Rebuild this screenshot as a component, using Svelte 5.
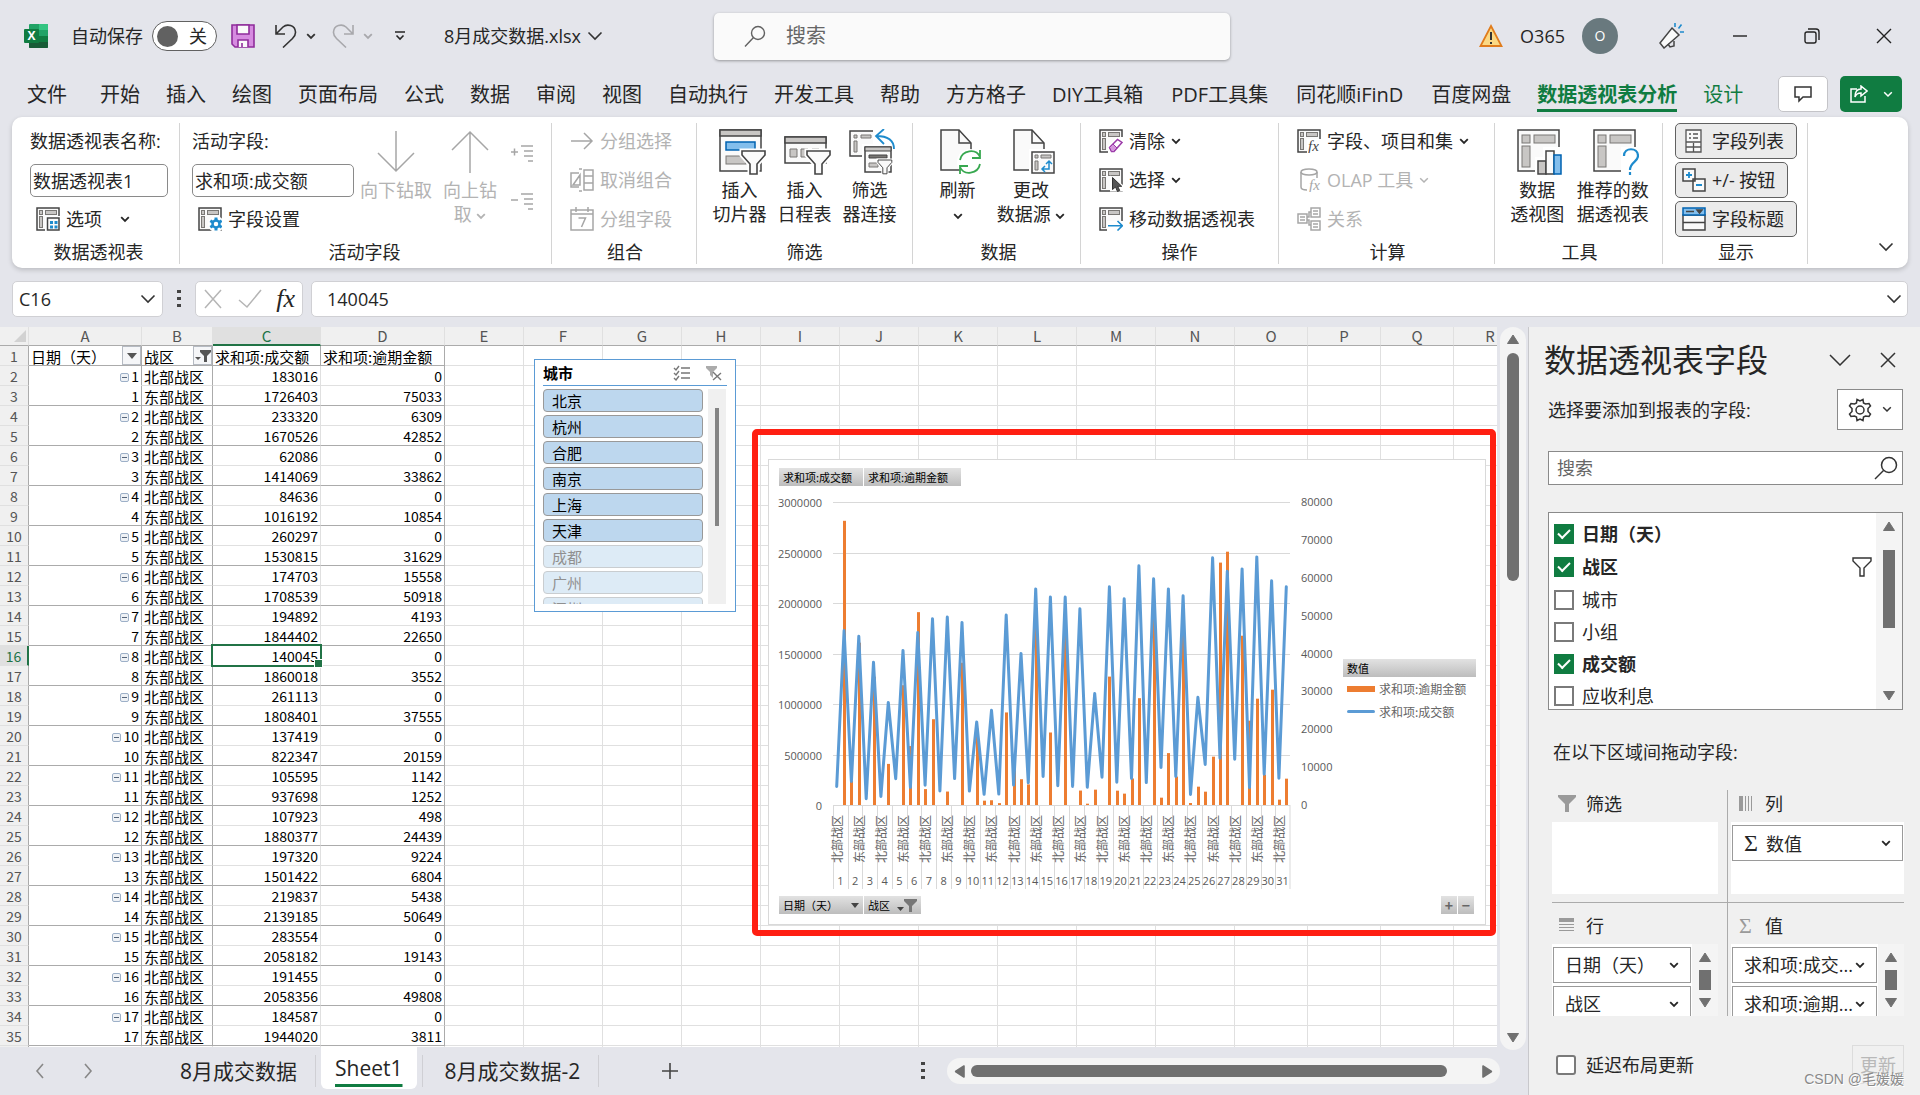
<script lang="ts">
  type Pair = [number, number];

  interface Field {
    name: string;
    checked: boolean;
    filtered?: boolean;
  }

  const menuTabs = [
    '文件', '开始', '插入', '绘图', '页面布局', '公式', '数据', '审阅', '视图', '自动执行',
    '开发工具', '帮助', '方方格子', 'DIY工具箱', 'PDF工具集', '同花顺iFinD', '百度网盘',
    '数据透视表分析', '设计',
  ];
  let activeMenu = $state('数据透视表分析');

  // Amount per day: [北部战区, 东部战区]
  const amount: Pair[] = [
    [183016, 1726403], [233320, 1670526], [62086, 1414069], [84636, 1016192],
    [260297, 1530815], [174703, 1708539], [194892, 1844402], [140045, 1860018],
    [261113, 1808401], [137419, 822347], [105595, 937698], [107923, 1880377],
    [197320, 1501422], [219837, 2139185], [283554, 2058182], [191455, 2058356],
    [184587, 1944020], [175000, 1104000], [275000, 2160000], [225000, 2042000],
    [262000, 2368000], [222000, 2240000], [372000, 2140000], [282000, 2072000],
    [104000, 1066000], [402000, 2448000], [462000, 2315000], [452000, 2338000],
    [174000, 2456000], [304000, 2220000], [265000, 2160000],
  ];

  // Overdue amount per day, same order
  const overdue: Pair[] = [
    [0, 75033], [6309, 42852], [0, 33862], [0, 10854], [0, 31629], [15558, 50918],
    [4193, 22650], [0, 3552], [0, 37555], [0, 20159], [1142, 1252], [498, 24439],
    [9224, 6804], [5438, 50649], [0, 19143], [0, 49808], [0, 3811], [350, 4050],
    [0, 33900], [3784, 3000], [7000, 28200], [0, 49400], [1936, 13700], [7500, 45400],
    [528, 4840], [3520, 12760], [64000, 66880], [0, 44700], [22264, 28072],
    [8000, 30448], [1408, 6952],
  ];

  const zones = ['北部战区', '东部战区'];
  const columns = 'ABCDEFGHIJKLMNOPQR'.split('');
  const extraColumns = columns.slice(4);

  const rows = Array.from({ length: 34 }, (_, i) => {
    const day = Math.floor(i / 2);
    const side = i % 2;
    return {
      no: i + 2,
      day: day + 1,
      first: side === 0,
      zone: zones[side],
      amount: amount[day][side],
      overdue: overdue[day][side],
    };
  });

  const cities = ['北京', '杭州', '合肥', '南京', '上海', '天津', '成都', '广州', '深圳'];

  let fields = $state<Field[]>([
    { name: '日期（天）', checked: true },
    { name: '战区', checked: true, filtered: true },
    { name: '城市', checked: false },
    { name: '小组', checked: false },
    { name: '成交额', checked: true },
    { name: '应收利息', checked: false },
  ]);

  // Chart geometry
  const plot = { left: 65, right: 522, top: 43, bottom: 346 };
  const plotHeight = plot.bottom - plot.top;
  const step = (plot.right - plot.left) / 62;
  const xAt = (i: number) => plot.left + (i + 0.5) * step;
  const flatAmount = amount.flat();
  const flatOverdue = overdue.flat();
  const linePoints = flatAmount
    .map((v, i) => `${xAt(i).toFixed(1)},${(plot.bottom - (v / 3000000) * plotHeight).toFixed(1)}`)
    .join(' ');
  const leftTicks = [0, 1, 2, 3, 4, 5, 6].map((n) => n * 500000);
  const rightTicks = [0, 1, 2, 3, 4, 5, 6, 7, 8].map((n) => n * 10000);
</script>

{#snippet chev()}
  <svg class="chev" viewBox="0 0 10 7" width="10" height="7"><path d="M1.2 1.2 5 5l3.8-3.8" /></svg>
{/snippet}

{#snippet bigChev()}
  <svg class="big-chev" viewBox="0 0 16 10" width="16" height="10"><path d="M1.5 1.5 8 8l6.500-6.500" /></svg>
{/snippet}

{#snippet tri(dir: string)}
  <svg class="tri {dir}" viewBox="0 0 14 11" width="14" height="11"><path d="M7 1 12.500 9.500h-11z" /></svg>
{/snippet}

{#snippet pivot(name: string)}
  <svg viewBox="0 0 24 24" width="24" height="24" fill="none">
    <rect x="1" y="1" width="22" height="22" fill="#fafafa" stroke="#444" stroke-width="1.500" />
    <rect x="3.500" y="3.500" width="3" height="4" fill="#c8c6c4" stroke="#797774" />
    <rect x="9.500" y="3.500" width="11" height="4" fill="#c8c6c4" stroke="#797774" />
    <rect x="3.500" y="9.500" width="3" height="11" fill="#c8c6c4" stroke="#797774" />
    {#if name === 'options'}
      <rect x="9" y="9" width="15" height="15" fill="#fff" />
      <rect x="11.500" y="11" width="11.500" height="12" fill="#fafafa" stroke="#444" stroke-width="1.500" />
      <path d="M14 14h3v3h-3zM18.500 14h3v3h-3zM14 18.500h3v3h-3zM18.500 18.500h3v3h-3z" fill="#1e8bcd" />
    {:else if name === 'settings'}
      <circle cx="18" cy="17" r="8" fill="#fff" />
      <path d="M18 10.500v13M12.300 13.800l11.400 6.400M12.300 20.200l11.400-6.400" stroke="#1e8bcd" stroke-width="3" />
      <circle cx="18" cy="17" r="3.500" fill="#fff" stroke="#1e8bcd" stroke-width="2.500" />
    {:else if name === 'clear'}
      <path d="M9 24V17l9-9h6v16z" fill="#fff" />
      <path d="m10.500 18.500 8-8 4.500 3-8 9h-2.500z" fill="#fff" stroke="#9b3aa8" stroke-width="1.500" />
      <path d="m10.500 18.500 3.500-3.500 4 4-3.500 3.500h-2z" fill="#d497dc" stroke="#9b3aa8" />
    {:else if name === 'select'}
      <path d="M11 7.500v16h13V17z" fill="#fff" />
      <path d="M13.500 9.500v12l3-2.500 2 4.500 2.200-1-2-4.200h4z" fill="#555" stroke="#333" />
    {:else if name === 'move'}
      <path d="M8 14h16v10H8z" fill="#fff" />
      <path d="M9 18.800h14M18.500 14l4.800 4.800-4.800 4.700" stroke="#1e8bcd" stroke-width="1.600" />
    {:else if name === 'calc'}
      <path d="M10 10h14v14H10z" fill="#fff" />
      <text x="11" y="22" class="fx-mark">fx</text>
    {/if}
  </svg>
{/snippet}

{#snippet bigPivot()}
  <rect x="1" y="1" width="41" height="41" fill="#fafafa" stroke="#444" stroke-width="1.500" />
  <rect x="5" y="6" width="8" height="8" fill="#c8c6c4" stroke="#797774" />
  <rect x="17" y="6" width="21" height="8" fill="#c8c6c4" stroke="#797774" />
  <rect x="5" y="17" width="8" height="21" fill="#c8c6c4" stroke="#797774" />
{/snippet}

{#snippet sheetIcon()}
  <path d="M1 1h18l12 13v27H1z" fill="#fafafa" stroke="#444" stroke-width="1.500" />
  <path d="M19 1v13h12" stroke="#444" stroke-width="1.500" />
{/snippet}

{#snippet funnel(x: number, y: number, s: number)}
  <g transform="translate({x} {y}) scale({s})">
    <path d="M0 0h23v4l-8 9v10H8V13L0 4z" fill="#fafafa" stroke="#fff" stroke-width="5" />
    <path d="M0 0h23v4l-8 9v10H8V13L0 4z" fill="#fafafa" stroke="#444" stroke-width="1.600" />
  </g>
{/snippet}

<div class="app">
  <header class="title-bar">
    <div class="quick">
      <svg class="logo" viewBox="0 0 24 24" width="24" height="24">
        <path d="M6 0h17a1 1 0 0 1 1 1v22a1 1 0 0 1-1 1H6a1 1 0 0 1-1-1V1a1 1 0 0 1 1-1z" fill="#21a366" />
        <path d="M15 0h8a1 1 0 0 1 1 1v5h-9z" fill="#33c481" />
        <path d="M5 12h10v12H6a1 1 0 0 1-1-1z" fill="#185c37" />
        <path d="M15 12h9v6h-9z" fill="#107c41" />
        <path d="M15 18h9v5a1 1 0 0 1-1 1h-8z" fill="#185c37" />
        <rect y="5" width="15" height="14" rx="1" fill="#107c41" />
        <text x="7.500" y="16" text-anchor="middle" class="logo-letter">X</text>
      </svg>
      <label class="autosave">
        <span>自动保存</span>
        <input type="checkbox" class="sr" />
        <span class="toggle"><i></i>关</span>
      </label>
      <button class="icon-btn save" aria-label="保存">
        <svg viewBox="0 0 24 24" width="24" height="24" fill="none" stroke="#8f2d9b" stroke-width="1.600">
          <path d="M1 1h22v22H4l-3-3z" fill="#d68be0" />
          <path d="M6 1h12v9H6zM7 23v-7h10v7" fill="#fafafa" />
          <path d="M11 19v4" />
        </svg>
      </button>
      <button class="icon-btn undo" aria-label="撤消">
        <svg viewBox="0 0 24 24" width="24" height="24"><path d="M2 1v9h9M2 10l7-7c4-3.500 12-2 12.500 5 .2 3-1.500 5-3 6.500L9 23.500" /></svg>
        {@render chev()}
      </button>
      <button class="icon-btn redo" aria-label="恢复">
        <svg viewBox="0 0 24 24" width="24" height="24"><path d="M22 1v9h-9M22 10l-7-7C11 -.5 3 1 2.500 8c-.2 3 1.500 5 3 6.500L15 23.500" /></svg>
        {@render chev()}
      </button>
      <button class="icon-btn more" aria-label="自定义快速访问工具栏">
        <svg viewBox="0 0 12 10" width="12" height="10"><path d="M1 1h10M2.500 4.500 6 8l3.500-3.500" /></svg>
      </button>
      <button class="file-name">8月成交数据.xlsx {@render bigChev()}</button>
    </div>
    <div class="search">
      <svg viewBox="0 0 22 22" width="22" height="22"><circle cx="14" cy="8" r="6.500" /><path d="m9.500 12.500-8.500 9" /></svg>
      <input aria-label="搜索" placeholder="搜索" />
    </div>
    <div class="account">
      <svg viewBox="0 0 24 24" width="24" height="24" class="warn">
        <path d="M12 2 22.500 22h-21z" fill="#fbd984" stroke="#e07c1c" stroke-width="1.800" />
        <path d="M12 8v8M12 18v2" stroke="#333" stroke-width="2" />
      </svg>
      <span>O365</span>
      <span class="avatar">O</span>
      <svg viewBox="0 0 26 26" width="26" height="26" class="horn">
        <path d="M14 5 21 12 6 25l-4-5z" fill="#fafafa" stroke="#444" stroke-width="1.500" />
        <path d="m10 21 2 3 4-1v-5" fill="none" stroke="#444" stroke-width="1.500" />
        <path d="M17 4V0M20.500 5.500l3-4M22 9h4" stroke="#1e8bcd" stroke-width="1.600" />
      </svg>
      <button class="win" aria-label="最小化"><svg viewBox="0 0 16 16" width="16" height="16"><path d="M1 8h14" /></svg></button>
      <button class="win" aria-label="还原"><svg viewBox="0 0 16 16" width="16" height="16"><rect x="1" y="4" width="11" height="11" rx="2" /><path d="M4 1h8a3 3 0 0 1 3 3v8" /></svg></button>
      <button class="win" aria-label="关闭"><svg viewBox="0 0 16 16" width="16" height="16"><path d="m1 1 14 14M15 1 1 15" /></svg></button>
    </div>
  </header>

  <nav class="menu">
    {#each menuTabs as tab}
      <button
        class="menu-tab"
        class:active={tab === activeMenu}
        class:context={tab === '设计'}
        class:latin={/[A-Z]/.test(tab)}
        onclick={() => (activeMenu = tab)}
      >
        {tab}
      </button>
    {/each}
    <div class="menu-right">
      <button class="comment-btn" aria-label="批注">
        <svg viewBox="0 0 18 18" width="18" height="18"><path d="M1 2h16v10H9l-4 4v-4H1z" /></svg>
      </button>
      <button class="share-btn" aria-label="共享">
        <svg viewBox="0 0 18 18" width="18" height="18"><path d="M7 4H1v13h14v-6M11 1l6 5-6 5V8c-3 0-5 1-6 4 0-5 2-8 6-8z" /></svg>
        {@render chev()}
      </button>
    </div>
  </nav>

  <section class="ribbon">
    <div class="group g-name">
      <div class="rows">
        <label for="pivot-name">数据透视表名称:</label>
        <input id="pivot-name" value="数据透视表1" />
        <button class="item pad">{@render pivot('options')}选项<span class="gap"></span>{@render chev()}</button>
      </div>
      <h2>数据透视表</h2>
    </div>

    <div class="group g-field">
      <div class="body">
        <div class="rows">
          <label for="active-field">活动字段:</label>
          <input id="active-field" value="求和项:成交额" />
          <button class="item pad">{@render pivot('settings')}字段设置</button>
        </div>
        <button class="big dim" disabled>
          <svg viewBox="0 0 44 46" width="44" height="46"><path d="M22 2v40M4 24l18 18 18-18" /></svg>
          <span>向下钻取</span>
        </button>
        <button class="big dim" disabled>
          <svg viewBox="0 0 44 46" width="44" height="46"><path d="M22 44V3M4 21 22 3l18 18" /></svg>
          <span>向上钻<br />取 {@render chev()}</span>
        </button>
        <div class="expand">
          <button class="dim" disabled aria-label="展开字段"><svg viewBox="0 0 24 18" width="24" height="18"><path d="M1 7h7M4.500 3.500v7M11 1h12M14 6h9M14 11h9M18 16h5" /></svg></button>
          <button class="dim" disabled aria-label="折叠字段"><svg viewBox="0 0 24 18" width="24" height="18"><path d="M1 7h7M11 1h12M14 6h9M14 11h9M18 16h5" /></svg></button>
        </div>
      </div>
      <h2>活动字段</h2>
    </div>

    <div class="group g-combine">
      <div class="rows">
        <button class="item dim" disabled><svg viewBox="0 0 24 24" width="24" height="24"><path d="M1 12h21M14 4l8 8-8 8" /></svg>分组选择</button>
        <button class="item dim" disabled><svg viewBox="0 0 24 24" width="24" height="24"><path d="M9 5H1v14h8M9 1h3M9 23h3M3 17l7-10v10zM14 2h9v20h-9zM14 8h9M14 15h9" /></svg>取消组合</button>
        <button class="item dim" disabled>
          <svg viewBox="0 0 24 24" width="24" height="24"><path d="M1 3h22v20H1zM1 7h22M6 0v5M18 0v5M8.500 11h7l-4 9" /></svg>分组字段
        </button>
      </div>
      <h2>组合</h2>
    </div>

    <div class="group g-filter">
      <div class="body even">
        <button class="big">
          <svg viewBox="0 0 48 46" width="48" height="46" fill="none">
            <rect x="1" y="1" width="41" height="41" fill="#fafafa" stroke="#444" stroke-width="1.500" />
            <path d="M1 1h41v6H1z" fill="#c8c6c4" stroke="#444" stroke-width="1.500" />
            <rect x="7" y="13" width="29" height="8" fill="#83beec" stroke="#0063b1" stroke-width="1.500" />
            <rect x="7" y="27" width="20" height="8" fill="#c8c6c4" stroke="#797774" />
            {@render funnel(23, 22, 1)}
          </svg>
          <span>插入<br />切片器</span>
        </button>
        <button class="big">
          <svg viewBox="0 0 48 46" width="48" height="46" fill="none">
            <rect x="1" y="8" width="41" height="26" fill="#fafafa" stroke="#444" stroke-width="1.500" />
            <path d="M1 8h41v6H1z" fill="#c8c6c4" stroke="#444" stroke-width="1.500" />
            <path d="M6 20h7v8H6zM17 20h7v8h-7zM28 20h7v8h-7z" fill="#c8c6c4" stroke="#797774" />
            {@render funnel(23, 22, 1)}
          </svg>
          <span>插入<br />日程表</span>
        </button>
        <button class="big">
          <svg viewBox="0 0 48 46" width="48" height="46" fill="none">
            <rect x="1" y="2" width="26" height="25" fill="#fafafa" stroke="#444" stroke-width="1.500" />
            <path d="M5 6h3v3H5zM12 6h10v3H12zM5 12h3v11H5z" fill="#c8c6c4" stroke="#797774" />
            <rect x="24" y="0" width="24" height="18" fill="#fff" />
            <rect x="13" y="15" width="32" height="30" fill="#fff" />
            <rect x="16" y="18" width="26" height="25" fill="#fafafa" stroke="#444" stroke-width="1.500" />
            <path d="M16 18h26v4H16z" fill="#c8c6c4" stroke="#444" />
            <path d="M20 26h18v3H20z" fill="#797774" stroke="#444" />
            <path d="M20 34h9v4h-9z" fill="#c8c6c4" stroke="#797774" />
            <path d="M35 0 27 7l8 8M27 7c11 0 18 4 18 13" stroke="#1e8bcd" stroke-width="1.800" />
            {@render funnel(29, 31, 0.6)}
          </svg>
          <span>筛选<br />器连接</span>
        </button>
      </div>
      <h2>筛选</h2>
    </div>

    <div class="group g-data">
      <div class="body even">
        <button class="big">
          <svg viewBox="0 0 44 46" width="44" height="46" fill="none">
            {@render sheetIcon()}
            <circle cx="30" cy="33" r="13" fill="#fff" />
            <path d="M20 31c2-10 16-12 20-3M40 21v8h-8M40 35c-2 10-16 12-20 3M20 45v-8h8" stroke="#38a850" stroke-width="1.800" />
          </svg>
          <span>刷新<br />{@render chev()}</span>
        </button>
        <button class="big">
          <svg viewBox="0 0 44 46" width="44" height="46" fill="none">
            {@render sheetIcon()}
            <rect x="16" y="20" width="28" height="26" fill="#fff" />
            <rect x="19" y="23" width="22" height="21" fill="#fafafa" stroke="#444" stroke-width="1.500" />
            <path d="M22 26h3v3h-3zM28 26h10v3H28zM22 32h3v9h-3z" fill="#c8c6c4" stroke="#797774" />
            <path d="M29 40h7v-8M32 37l-3 3 3 3M33 35l3-3 3 3" stroke="#1e8bcd" stroke-width="1.500" />
          </svg>
          <span>更改<br />数据源 {@render chev()}</span>
        </button>
      </div>
      <h2>数据</h2>
    </div>

    <div class="group g-action">
      <div class="rows">
        <button class="item">{@render pivot('clear')}清除 {@render chev()}</button>
        <button class="item">{@render pivot('select')}选择 {@render chev()}</button>
        <button class="item">{@render pivot('move')}移动数据透视表</button>
      </div>
      <h2>操作</h2>
    </div>

    <div class="group g-calc">
      <div class="rows">
        <button class="item">{@render pivot('calc')}字段、项目和集 {@render chev()}</button>
        <button class="item dim" disabled>
          <svg viewBox="0 0 24 24" width="24" height="24">
            <path d="M4 4v15c0 2 3 3 6 3M20 4v6" /><ellipse cx="12" cy="4" rx="8" ry="3" />
            <text x="12" y="22" class="fx-mark grey">fx</text>
          </svg>OLAP 工具 {@render chev()}
        </button>
        <button class="item dim" disabled>
          <svg viewBox="0 0 24 24" width="24" height="24"><path d="M1 7h9v9H1zM14 1h9v9h-9zM14 14h9v9h-9zM10 10h2V5h2M10 13h2v5h2M3 10h5M3 13h5M16 4h5M16 7h5M16 17h5M16 20h5" /></svg>关系
        </button>
      </div>
      <h2>计算</h2>
    </div>

    <div class="group g-tool">
      <div class="body even">
        <button class="big">
          <svg viewBox="0 0 46 46" width="46" height="46" fill="none">
            {@render bigPivot()}
            <path d="M18 28h8V18h20v28H18z" fill="#fff" />
            <path d="M21 32h8v13h-8z" fill="#c8c6c4" stroke="#444" stroke-width="1.500" />
            <path d="M29 22h8v23h-8z" fill="#fafafa" stroke="#444" stroke-width="1.500" />
            <path d="M37 26h7v19h-7z" fill="#83beec" stroke="#0063b1" stroke-width="1.500" />
          </svg>
          <span>数据<br />透视图</span>
        </button>
        <button class="big">
          <svg viewBox="0 0 46 46" width="46" height="46" fill="none">
            {@render bigPivot()}
            <path d="M28 18h18v28H28z" fill="#fff" />
            <path d="M31 27c0-9 14-9 14 0 0 6-8 6-8 14M37 43v3" stroke="#1e8bcd" stroke-width="2.200" />
          </svg>
          <span>推荐的数<br />据透视表</span>
        </button>
      </div>
      <h2>工具</h2>
    </div>

    <div class="group g-show">
      <div class="rows">
        <button class="item on">
          <svg viewBox="0 0 24 24" width="24" height="24" fill="none" stroke="#555" stroke-width="1.300">
            <path d="M4 1h15v22H4z" fill="#fafafa" /><path d="M7 5h2M11 5h5M7 9h2M11 9h5M4 13h15M11.500 14v9M4 18h15" />
          </svg>字段列表
        </button>
        <button class="item on">
          <svg viewBox="0 0 24 24" width="24" height="24" fill="#fafafa" stroke="#444" stroke-width="1.500">
            <path d="M1 1h12v12H1zM11 11h12v12H11z" /><path d="M4 7h6M7 4v6M14 17h6" stroke="#1e8bcd" stroke-width="1.800" />
          </svg>+/- 按钮
        </button>
        <button class="item on">
          <svg viewBox="0 0 24 24" width="24" height="24" fill="#fafafa" stroke="#444" stroke-width="1.500">
            <path d="M1 8h22v15H1zM1 15.500h22" /><path d="M1 1h22v7H1z" fill="#83beec" stroke="#0063b1" />
            <path d="M4 4.500h8" /><path d="M15 3h5l-2.500 3z" fill="#444" />
          </svg>字段标题
        </button>
      </div>
      <h2>显示</h2>
    </div>
    <button class="collapse" aria-label="折叠功能区">{@render bigChev()}</button>
  </section>

  <div class="formula-bar">
    <div class="name-box"><input aria-label="名称框" value="C16" />{@render bigChev()}</div>
    <svg class="dots" viewBox="0 0 4 20" width="4" height="20"><path d="M0 1h4v3H0zM0 8h4v3H0zM0 15h4v3H0z" /></svg>
    <div class="fx-box">
      <svg viewBox="0 0 20 20" width="20" height="20"><path d="m2 1 16 18M18 1 2 19" /></svg>
      <svg viewBox="0 0 24 20" width="24" height="20"><path d="m1 11 8 7L23 1" /></svg>
      <em>fx</em>
    </div>
    <div class="formula"><input aria-label="编辑栏" value="140045" />{@render bigChev()}</div>
  </div>

  <main>
    <div class="workbook">
      <div class="sheet-row">
        <div class="sheet">
          <table>
            <colgroup>
              <col class="c-no" /><col class="c-a" /><col class="c-b" /><col class="c-c" /><col class="c-d" />
              {#each extraColumns as _, i}<col class={i < 10 ? 'c-wide' : 'c-mid'} />{/each}
            </colgroup>
            <thead>
              <tr>
                <th><svg viewBox="0 0 12 12" width="12" height="12"><path d="M12 0v12H0z" fill="#d2d2d2" /></svg></th>
                {#each columns as letter}<th class:current={letter === 'C'}>{letter}</th>{/each}
              </tr>
            </thead>
            <tbody>
              <tr class="pair-end">
                <th>1</th>
                <td class="dark"><div class="head-cell">日期（天）<button class="drop" aria-label="筛选日期"><svg viewBox="0 0 10 6" width="10" height="6"><path d="M0 0h10L5 6z" /></svg></button></div></td>
                <td class="dark"><div class="head-cell">战区<button class="drop" aria-label="筛选战区"><svg viewBox="0 0 16 14" width="16" height="14"><path d="M5 1h11v2l-4 4v6H9V7L5 3zM0 8h6l-3 3z" /></svg></button></div></td>
                <td>求和项:成交额</td>
                <td class="dark">求和项:逾期金额</td>
                {#each extraColumns as _}<td></td>{/each}
              </tr>
              {#each rows as row}
                <tr class:pair-end={!row.first}>
                  <th class:current={row.no === 16}>{row.no}</th>
                  <td class="dark num" class:open={row.first}>{#if row.first}<i class="fold"></i>{/if}{row.day}</td>
                  <td class="dark">{row.zone}</td>
                  <td class="num" class:selected={row.no === 16}>{row.amount}</td>
                  <td class="dark num">{row.overdue}</td>
                  {#each extraColumns as _}<td></td>{/each}
                </tr>
              {/each}
              <tr>
                <th></th>
                {#each columns as _}<td></td>{/each}
              </tr>
            </tbody>
          </table>

          <!-- Slicer -->
          <aside class="slicer">
            <header>
              <b>城市</b>
              <svg viewBox="0 0 17 16" width="17" height="16"><path d="m1 3 2 2 3-4M1 8l2 2 3-4M1 13l2 2 3-4M8 3h9M8 8h9M8 13h9" /></svg>
              <svg viewBox="0 0 16 16" width="16" height="16"><path d="M0 1h11v2L7 7v6L4 10V7L0 3z" fill="#ababab" stroke="none" /><path d="m7 7 8 8M15 8l-8 7" /></svg>
            </header>
            <div class="slicer-body">
              <div class="cities">
                {#each cities as city, i}<button class:off={i > 5}>{city}</button>{/each}
              </div>
              <div class="slicer-scroll"><i></i></div>
            </div>
          </aside>

          <!-- Pivot chart -->
          <div class="chart">
            <svg viewBox="0 0 718 466" width="718" height="466">
              {#each leftTicks as v}
                {@const y = Math.round(plot.bottom - (v / 3000000) * plotHeight) + 0.5}
                <line class="rule" x1={plot.left} x2={plot.right} y1={y} y2={y} />
                <text class="axis" x="54" y={y + 4} text-anchor="end">{v}</text>
              {/each}
              {#each rightTicks as v}
                <text class="axis" x="533" y={plot.bottom - (v / 80000) * plotHeight + 4}>{v}</text>
              {/each}
              {#each flatOverdue as v, i}
                {@const h = (v / 80000) * plotHeight}
                <rect class="bar" x={Math.round(xAt(i)) - 1} y={plot.bottom - h} width="3" height={h} />
              {/each}
              <polyline class="trend" points={linePoints} />
              {#each amount as _, d}
                {@const x = Math.round(plot.left + d * 2 * step) + 0.5}
                <line class="rule" x1={x} x2={x} y1={plot.bottom} y2="430" />
                <text class="axis" x={plot.left + (d * 2 + 1) * step} y="426" text-anchor="middle">{d + 1}</text>
              {/each}
              <line class="rule" x1={plot.right} x2={plot.right} y1={plot.bottom} y2="430" />
              {#each flatAmount as _, i}
                {#if i % 3 === 0}
                  <text class="zone" transform="translate({xAt(i) + 5} 404) rotate(-90)">{zones[i % 2]}</text>
                {/if}
              {/each}
            </svg>
            <div class="chart-fields top">
              <button>求和项:成交额</button><button class="wide">求和项:逾期金额</button>
            </div>
            <div class="chart-fields bottom">
              <button>日期（天）<svg viewBox="0 0 8 5" width="8" height="5"><path d="M0 0h8L4 5z" /></svg></button>
              <button class="narrow">战区<svg viewBox="0 0 20 13" width="20" height="13"><path d="M0 8h7l-3.500 4z" /><path d="M7 0h13v2l-5 5v6h-3V7L7 2z" fill="#777" /></svg></button>
            </div>
            <div class="legend">
              <div class="legend-title">数值</div>
              <div class="legend-row"><i class="swatch"></i>求和项:逾期金额</div>
              <div class="legend-row"><i class="swatch line"></i>求和项:成交额</div>
            </div>
            <div class="zoomers"><button>+</button><button>−</button></div>
          </div>
          <div class="red-frame"></div>
        </div>
        <div class="vscroll">{@render tri('up')}<i></i>{@render tri('down')}</div>
      </div>

      <footer class="sheet-tabs">
        <button class="arrow" aria-label="上一张"><svg viewBox="0 0 10 16" width="10" height="16"><path d="M8 1 2 8l6 7" /></svg></button>
        <button class="arrow" aria-label="下一张"><svg viewBox="0 0 10 16" width="10" height="16"><path d="m2 1 6 7-6 7" /></svg></button>
        <button class="sheet-tab first">8月成交数据</button>
        <button class="sheet-tab active">Sheet1</button>
        <button class="sheet-tab last">8月成交数据-2</button>
        <button class="add" aria-label="新工作表"><svg viewBox="0 0 18 18" width="18" height="18"><path d="M9 1v16M1 9h16" /></svg></button>
        <svg class="dots" viewBox="0 0 4 20" width="4" height="20"><path d="M0 1h4v3H0zM0 8h4v3H0zM0 15h4v3H0z" /></svg>
        <div class="hscroll">{@render tri('left')}<i></i>{@render tri('right')}</div>
      </footer>
    </div>

    <aside class="pane">
      <header class="pane-head">
        <h1>数据透视表字段</h1>
        <button aria-label="任务窗格选项"><svg viewBox="0 0 22 12" width="22" height="12"><path d="m1 1 10 10L21 1" /></svg></button>
        <button aria-label="关闭"><svg viewBox="0 0 16 16" width="16" height="16"><path d="m1 1 14 14M15 1 1 15" /></svg></button>
      </header>
      <div class="pane-sub">
        <span>选择要添加到报表的字段:</span>
        <button class="gear" aria-label="工具">
          <svg viewBox="0 0 24 24" width="24" height="24"><path d="M8.500 5 9 1.500l3 1.500 3-1.500.5 3.500 2 1 3.500-.5 1.500 2.500-2.500 2.500v3l2.500 2.500-1.500 2.500-3.500-.5-2 1-.5 3.500-3-1.500-3 1.500-.5-3.500-2-1-3.500.5L1.500 16 4 13.500v-3L1.500 8 3 5.500l3.500.5z" /><circle cx="12" cy="12" r="4" /></svg>
          {@render chev()}
        </button>
      </div>
      <div class="pane-search">
        <input aria-label="搜索字段" placeholder="搜索" />
        <svg viewBox="0 0 24 24" width="24" height="24"><circle cx="15" cy="9" r="7.500" /><path d="M9.500 14.500 1 23" /></svg>
      </div>
      <div class="field-list">
        <div class="field-items">
          {#each fields as field}
            <label class="field" class:bold={field.checked}>
              <input type="checkbox" bind:checked={field.checked} />
              <span>{field.name}</span>
              {#if field.filtered}
                <svg viewBox="0 0 20 20" width="20" height="20"><path d="M1 1h18v3l-7 7v8H8v-8L1 4z" /></svg>
              {/if}
            </label>
          {/each}
        </div>
        <div class="mini-scroll">{@render tri('up')}<i></i>{@render tri('down')}</div>
      </div>
      <p class="hint">在以下区域间拖动字段:</p>
      <div class="areas">
        <section>
          <h3><svg viewBox="0 0 18 18" width="18" height="18"><path d="M0 0h18v2l-7 7v8H7V9L0 2z" /></svg>筛选</h3>
          <div class="drop-zone"></div>
        </section>
        <section class="right">
          <h3><svg viewBox="0 0 18 18" width="18" height="18"><path d="M0 1h4v15H0zM6 1h1v15H6zM9 1h1v15H9zM12 1h1v15h-1z" /></svg>列</h3>
          <div class="drop-zone"><div class="chips"><button><span><b class="sigma">Σ</b>数值</span>{@render chev()}</button></div></div>
        </section>
        <section class="low">
          <h3><svg viewBox="0 0 18 18" width="18" height="18"><path d="M1 1h15v4H1zM1 7h15v1H1zM1 10h15v1H1zM1 13h15v1H1z" /></svg>行</h3>
          <div class="drop-zone">
            <div class="chips">
              <button><span>日期（天）</span>{@render chev()}</button>
              <button><span>战区</span>{@render chev()}</button>
            </div>
            <div class="mini-scroll">{@render tri('up')}<i></i>{@render tri('down')}</div>
          </div>
        </section>
        <section class="low right">
          <h3><b class="sigma">Σ</b>值</h3>
          <div class="drop-zone">
            <div class="chips">
              <button><span>求和项:成交...</span>{@render chev()}</button>
              <button><span>求和项:逾期...</span>{@render chev()}</button>
            </div>
            <div class="mini-scroll">{@render tri('up')}<i></i>{@render tri('down')}</div>
          </div>
        </section>
      </div>
      <div class="pane-foot">
        <label class="field"><input type="checkbox" class="soft" /><span>延迟布局更新</span></label>
        <button disabled>更新</button>
      </div>
      <span class="watermark">CSDN @毛媛媛</span>
    </aside>
  </main>
</div>

<style>
  :global(body) {
    background: #e4e5eb;
  }

  .app {
    display: flex;
    flex-direction: column;
    height: 100vh;
    overflow: hidden;
    background: #e4e5eb;
    color: #262626;
    font-family: 'Open Sans', 'Noto Sans CJK SC', sans-serif;
    font-size: 18px;
    line-height: 24px;
  }

  .app * {
    box-sizing: border-box;
  }

  svg {
    flex: none;
    display: block;
  }

  button {
    padding: 0;
    border: 0;
    background: none;
    color: inherit;
    font: inherit;
    white-space: nowrap;
  }

  input {
    font: inherit;
    color: inherit;
    min-width: 0;
  }

  .chev {
    display: inline-block;
    vertical-align: middle;
    fill: none;
    stroke: currentColor;
    stroke-width: 1.8;
  }

  .big-chev {
    fill: none;
    stroke: #333;
    stroke-width: 1.6;
  }

  .sr {
    position: absolute;
    opacity: 0;
  }

  /* ── Title bar ────────────────────────────────────────── */
  .title-bar {
    display: flex;
    align-items: center;
    flex: none;
    height: 72px;
  }

  .quick {
    display: flex;
    align-items: center;
    flex: none;
    width: 714px;
    padding-left: 24px;
  }

  .logo-letter {
    font: bold 12px 'Open Sans', sans-serif;
    fill: #fff;
  }

  .autosave {
    display: flex;
    align-items: center;
    gap: 9px;
    margin: 0 14px 0 23px;
  }

  .toggle {
    display: flex;
    align-items: center;
    justify-content: space-between;
    width: 65px;
    height: 30px;
    padding: 0 9px 0 4px;
    border: 1px solid #616161;
    border-radius: 15px;
    background: #fff;
  }

  .toggle i {
    width: 21px;
    height: 21px;
    border-radius: 50%;
    background: #616161;
  }

  .icon-btn {
    display: flex;
    align-items: center;
    gap: 8px;
  }

  .undo, .redo {
    margin-left: 19px;
    color: #333;
  }

  .undo > svg:first-child, .redo > svg:first-child, .more svg {
    fill: none;
    stroke: currentColor;
    stroke-width: 1.6;
  }

  .redo {
    margin-left: 15px;
    color: #a8a8ac;
  }

  .more {
    margin-left: 21px;
  }

  .file-name {
    display: flex;
    align-items: center;
    gap: 6px;
    margin-left: 38px;
  }

  .search {
    display: flex;
    align-items: center;
    flex: 0 1 516px;
    height: 47px;
    padding: 0 30px;
    border-radius: 5px;
    background: #fafafa;
    box-shadow: 0 1px 3px rgba(0, 0, 0, 0.35);
  }

  .search svg {
    fill: none;
    stroke: #616161;
    stroke-width: 1.4;
  }

  .search input {
    flex: 1;
    margin-left: 20px;
    padding: 0;
    border: 0;
    background: none;
    font-size: 20px;
    outline: none;
  }

  input::placeholder {
    color: #666;
    opacity: 1;
  }

  .account {
    display: flex;
    align-items: center;
    margin-left: auto;
    padding-right: 28px;
  }

  .warn {
    margin-right: 17px;
  }

  .avatar {
    width: 36px;
    margin: 0 40px 0 17px;
    border-radius: 50%;
    background: #69797e;
    color: #fff;
    font-size: 14px;
    line-height: 36px;
    text-align: center;
  }

  .horn {
    margin-right: 48px;
  }

  .win svg {
    fill: none;
    stroke: #222;
    stroke-width: 1.4;
  }

  .win + .win {
    margin-left: 56px;
  }

  /* ── Menu ─────────────────────────────────────────────── */
  .menu {
    display: flex;
    flex: none;
    height: 45px;
    padding: 0 18px 0 14px;
    font-size: 20px;
  }

  .menu-tab {
    margin: 7px 13px 5px;
    padding-top: 2px;
    line-height: 28px;
    border-bottom: 3px solid transparent;
  }

  .menu-tab:first-child {
    margin-right: 20px;
  }

  .menu-tab.latin {
    margin-right: 15px;
  }

  .menu-tab.context {
    color: #107c41;
  }

  .menu-tab.active {
    border-color: #107c41;
    color: #107c41;
    font-weight: 700;
  }

  .menu-right {
    display: flex;
    gap: 12px;
    margin: 4px 0 0 auto;
    height: 36px;
  }

  .comment-btn {
    display: grid;
    place-items: center;
    width: 50px;
    border: 1px solid #c4c4c8;
    border-radius: 5px;
    background: #fff;
  }

  .comment-btn svg {
    fill: none;
    stroke: #333;
    stroke-width: 1.5;
  }

  .share-btn {
    display: flex;
    align-items: center;
    justify-content: center;
    gap: 15px;
    width: 62px;
    border-radius: 5px;
    background: #107c41;
    color: #fff;
  }

  .share-btn svg {
    fill: none;
    stroke: #fff;
    stroke-width: 1.5;
  }

  /* ── Ribbon ───────────────────────────────────────────── */
  .ribbon {
    display: flex;
    flex: none;
    margin: 0 12px;
    padding: 6px 0 4px;
    border-radius: 10px;
    background: #fff;
    box-shadow: 0 2px 5px rgba(0, 0, 0, 0.18);
  }

  .group {
    display: flex;
    flex-direction: column;
    flex: none;
    height: 141px;
    padding: 0 16px 0 18px;
    border-right: 1px solid #d4d4d4;
  }

  .ribbon h2 {
    margin: 3px 0 0;
    font-size: 18px;
    font-weight: 400;
    line-height: 24px;
    text-align: center;
  }

  .g-name { width: 168px; padding-right: 12px; }
  .g-field { width: 372px; padding: 0 14px 0 12px; }
  .g-combine { width: 145px; }
  .g-filter { width: 216px; padding: 0 10px; }
  .g-data { width: 168px; padding: 0 8px 0 12px; }
  .g-action { width: 198px; padding: 0 18px; }
  .g-calc { width: 216px; }
  .g-tool { width: 168px; padding: 0 7px 0 9px; }
  .g-show { width: 145px; padding: 0 10px 0 12px; }

  .rows {
    display: grid;
    grid-template-rows: repeat(3, 36px);
    gap: 3px;
    align-items: center;
    justify-items: start;
  }

  .rows input {
    width: 138px;
    height: 33px;
    padding: 0 2px;
    border: 1px solid #8a8a8a;
    border-radius: 5px;
    background: #fff;
  }

  .g-field .rows input {
    width: 162px;
  }

  .item {
    display: flex;
    align-items: center;
    gap: 6px;
    height: 36px;
  }

  .item.pad {
    padding-left: 6px;
  }

  .item .gap {
    width: 6px;
  }

  .item.on {
    padding: 0 12px 0 6px;
    border: 1px solid #616161;
    border-radius: 5px;
    background: #ebebeb;
  }

  .dim {
    color: #b3b3b3;
  }

  .dim > svg {
    fill: none;
    stroke: #a6a6a6;
    stroke-width: 1.5;
  }

  .dim > .chev {
    stroke: #b3b3b3;
  }

  .body {
    display: flex;
    height: 114px;
  }

  .body.even {
    justify-content: space-around;
  }

  .big {
    display: flex;
    flex-direction: column;
    align-items: center;
    gap: 3px;
    padding-top: 6px;
    line-height: 24px;
  }

  .g-filter .big svg:first-child, .g-tool .big svg:first-child {
    margin-left: 6px;
  }

  .g-data .big > svg {
    margin-left: 8px;
  }

  .g-field .big {
    width: 74px;
    margin-left: 5px;
  }

  .g-field .big + .big {
    margin-left: 0;
  }

  .expand {
    display: flex;
    flex-direction: column;
    gap: 30px;
    padding: 22px 0 0 3px;
  }

  .fx-mark {
    font: italic 15px 'Liberation Serif', serif;
    fill: #444;
    stroke: none;
  }

  .fx-mark.grey {
    fill: #a6a6a6;
  }

  .collapse {
    align-self: flex-end;
    margin: 0 14px 12px auto;
  }

  /* ── Formula bar ──────────────────────────────────────── */
  .formula-bar {
    display: flex;
    align-items: center;
    flex: none;
    height: 36px;
    margin: 13px 12px 10px;
  }

  .formula-bar > div {
    display: flex;
    align-items: center;
    height: 36px;
    border: 1px solid #d0d0d4;
    border-radius: 5px;
    background: #fff;
  }

  .formula-bar input {
    flex: 1;
    padding: 0;
    border: 0;
    background: none;
    outline: none;
  }

  .formula-bar .name-box {
    width: 151px;
    padding: 0 6px;
  }

  .dots {
    margin: 0 14px;
    fill: #444;
  }

  .formula-bar .fx-box {
    justify-content: space-between;
    width: 108px;
    padding: 0 7px;
    margin-right: 8px;
  }

  .fx-box svg {
    fill: none;
    stroke: #b5b5b5;
    stroke-width: 1.5;
  }

  .fx-box em {
    font: italic 26px/26px 'Liberation Serif', serif;
  }

  .formula-bar .formula {
    flex: 1;
    padding: 0 5px 0 15px;
  }

  /* ── Sheet ────────────────────────────────────────────── */
  main {
    display: flex;
    flex: 1;
    min-height: 0;
  }

  .workbook {
    display: flex;
    flex-direction: column;
    flex: 1;
    min-width: 0;
  }

  .sheet-row {
    display: flex;
    flex: 1;
    min-height: 0;
  }

  .sheet {
    position: relative;
    flex: 1;
    overflow: hidden;
    background: #fff;
    font-family: 'Noto Sans CJK SC', sans-serif;
  }

  table {
    width: 0;
    table-layout: fixed;
    border-collapse: separate;
    border-spacing: 0;
    font-size: 15px;
    line-height: 17px;
  }

  .c-no { width: 29px; }
  .c-a { width: 113px; }
  .c-b { width: 71px; }
  .c-c { width: 108px; }
  .c-d { width: 124px; }
  .c-wide { width: 79px; }
  .c-mid { width: 73px; }

  th, td {
    height: 20px;
    padding: 2px 0 0;
    border-right: 1px solid #e0e0e0;
    border-bottom: 1px solid #e0e0e0;
    font-weight: 400;
    white-space: nowrap;
  }

  td {
    padding: 2px 2px 0;
    color: #000;
  }

  thead th {
    height: 19px;
    padding: 0;
    border-bottom-color: #ababab;
    background: #f0f0f0;
    color: #555;
    line-height: 18px;
  }

  thead th svg {
    margin-left: 14px;
  }

  tbody th {
    border-right-color: #ababab;
    background: #f0f0f0;
    color: #555;
    font-size: 14px;
  }

  th.current {
    background: #e0e0e0;
    color: #217346;
  }

  thead th.current {
    border-bottom: 2px solid #217346;
    line-height: 17px;
  }

  tbody th.current {
    border-right: 2px solid #217346;
  }

  td.dark {
    border-right-color: #ababab;
  }

  .pair-end td:nth-child(-n + 5) {
    border-bottom-color: #ababab;
  }

  tr:first-child td:nth-child(4), tr td:nth-child(3) {
    border-right-color: #ababab;
  }

  td:nth-child(n + 6), tr:last-child td {
    border-color: #e0e0e0;
  }

  td.open {
    border-bottom-color: transparent;
  }

  .num {
    font-size: 14px;
    text-align: right;
  }

  .fold {
    display: inline-block;
    width: 9px;
    height: 9px;
    margin-right: 2px;
    border: 1px solid #9db0c8;
    border-radius: 2px;
    background: linear-gradient(#56657a, #56657a) center / 5px 1px no-repeat #eef1f5;
  }

  .head-cell {
    display: flex;
    justify-content: space-between;
    height: 17px;
    margin-right: -2px;
  }

  .drop {
    display: grid;
    place-items: center;
    flex: none;
    width: 19px;
    height: 19px;
    margin-top: -2px;
    border: 1px solid #b5bac2;
    background: #f5f6f8;
  }

  .drop svg {
    fill: #555;
  }

  td.selected {
    position: relative;
  }

  td.selected::before {
    content: '';
    position: absolute;
    inset: -2px;
    border: 2px solid #217346;
  }

  td.selected::after {
    content: '';
    position: absolute;
    right: -3px;
    bottom: -3px;
    width: 7px;
    height: 7px;
    border: 1px solid #fff;
    background: #217346;
  }

  /* ── Slicer ───────────────────────────────────────────── */
  .slicer {
    position: absolute;
    left: 534px;
    top: 32px;
    width: 202px;
    height: 253px;
    padding: 0 8px 7px;
    border: 1px solid #5b9bd5;
    background: #fff;
    font-size: 15px;
  }

  .slicer header {
    display: flex;
    align-items: center;
    gap: 16px;
    height: 26px;
    padding-right: 5px;
    border-bottom: 1px solid #5b9bd5;
  }

  .slicer header b {
    flex: 1;
    color: #000;
  }

  .slicer header svg {
    fill: none;
    stroke: #777;
    stroke-width: 1.4;
  }

  .slicer-body {
    display: flex;
    justify-content: space-between;
    height: 218px;
    padding-top: 3px;
  }

  .cities {
    display: flex;
    flex-direction: column;
    gap: 3px;
    width: 160px;
    overflow: hidden;
  }

  .cities button {
    flex: none;
    height: 23px;
    padding-left: 8px;
    border: 1px solid #999;
    border-radius: 4px;
    background: #bdd7ee;
    color: #000;
    line-height: 21px;
    text-align: left;
  }

  .cities .off {
    border-color: #c9cdd0;
    background: #ddebf6;
    color: #909090;
  }

  .slicer-scroll {
    width: 18px;
    margin-right: 1px;
    padding: 19px 7px;
    background: #f0f0f0;
  }

  .slicer-scroll i {
    display: block;
    width: 4px;
    height: 118px;
    background: #848484;
  }

  /* ── Chart ────────────────────────────────────────────── */
  .chart {
    position: absolute;
    left: 768px;
    top: 132px;
    border: 1px solid #d9d9d9;
    background: #fff;
    font-size: 11px;
    line-height: 18px;
    color: #000;
  }

  .chart > svg {
    margin: -1px;
  }

  .rule {
    stroke: #d9d9d9;
  }

  .axis {
    font: 11px 'Open Sans', sans-serif;
    fill: #595959;
  }

  .zone {
    font: 12px 'Noto Sans CJK SC', sans-serif;
    fill: #666;
  }

  .bar {
    fill: #ed7d31;
  }

  .trend {
    fill: none;
    stroke: #5b9bd5;
    stroke-width: 3;
    stroke-linecap: round;
    stroke-linejoin: round;
  }

  .chart-fields {
    position: absolute;
    left: 10px;
    display: flex;
    gap: 1px;
  }

  .chart-fields.top { top: 8px; }
  .chart-fields.bottom { top: 436px; }

  .chart-fields button {
    display: flex;
    align-items: center;
    justify-content: space-between;
    width: 84px;
    height: 18px;
    padding: 0 4px;
    background: linear-gradient(#e2e2e2, #bdbdbd);
  }

  .chart-fields .wide { width: 97px; }
  .chart-fields .narrow { width: 57px; }

  .chart-fields svg {
    fill: #444;
  }

  .legend {
    position: absolute;
    left: 574px;
    top: 199px;
    width: 133px;
  }

  .legend-title {
    padding-left: 4px;
    background: linear-gradient(#e2e2e2, #bdbdbd);
  }

  .legend-row {
    display: flex;
    align-items: center;
    gap: 4px;
    padding-left: 4px;
    color: #666;
    font-size: 12px;
    line-height: 23px;
  }

  .swatch {
    width: 28px;
    height: 6px;
    background: #ed7d31;
  }

  .swatch.line {
    height: 3px;
    border-radius: 2px;
    background: #5b9bd5;
  }

  .zoomers {
    position: absolute;
    left: 672px;
    top: 436px;
    display: flex;
    gap: 1px;
  }

  .zoomers button {
    width: 16px;
    height: 18px;
    background: linear-gradient(#e2e2e2, #bdbdbd);
    color: #666;
    font-weight: 700;
    font-size: 14px;
    line-height: 16px;
  }

  .red-frame {
    position: absolute;
    left: 752px;
    top: 102px;
    width: 744px;
    height: 507px;
    border: 6px solid #ff1f12;
    border-radius: 5px;
    pointer-events: none;
  }

  /* ── Scrollbars ───────────────────────────────────────── */
  .tri {
    fill: #707070;
    stroke: #707070;
    stroke-linejoin: round;
  }

  .tri.down { transform: rotate(180deg); }
  .tri.left { transform: rotate(-90deg); }
  .tri.right { transform: rotate(90deg); }

  .vscroll {
    display: flex;
    flex-direction: column;
    align-items: center;
    width: 26px;
    margin: 0 2px -3px 3px;
    padding: 7px 0;
    border-radius: 13px;
    background: #f4f4f4;
  }

  .vscroll i {
    width: 12px;
    height: 228px;
    margin: 8px 0 auto;
    border-radius: 6px;
    background: #707070;
  }

  .hscroll {
    display: flex;
    align-items: center;
    flex: 0 1 553px;
    height: 26px;
    padding: 0 6px;
    border-radius: 13px;
    background: #f4f4f4;
  }

  .hscroll i {
    width: 476px;
    height: 12px;
    margin: 0 auto 0 4px;
    border-radius: 6px;
    background: #707070;
  }

  .mini-scroll {
    display: flex;
    flex-direction: column;
    align-items: center;
    flex: none;
    width: 26px;
    padding: 8px 0;
    background: #f4f4f4;
  }

  .mini-scroll i {
    width: 12px;
    height: 20px;
    margin: auto;
    background: #707070;
  }

  /* ── Sheet tabs ───────────────────────────────────────── */
  .sheet-tabs {
    display: flex;
    align-items: center;
    flex: none;
    height: 48px;
    padding: 0 28px 0 35px;
    font-size: 21px;
  }

  .sheet-tabs svg {
    stroke-width: 1.6;
  }

  .arrow svg, .add svg {
    fill: none;
    stroke: #888;
  }

  .arrow + .arrow {
    margin-left: 38px;
  }

  .sheet-tab {
    height: 32px;
    line-height: 32px;
  }

  .sheet-tab.first {
    margin-left: 69px;
    padding: 0 18px;
    border-right: 1px solid #cfcfd4;
  }

  .sheet-tab.active {
    align-self: flex-start;
    height: 42px;
    margin: 0 5px;
    padding: 0 14px;
    border-radius: 0 0 6px 6px;
    background: #fff;
    line-height: 37px;
    text-decoration: underline 3px #107c41;
    text-underline-offset: 8px;
  }

  .sheet-tab.last {
    padding: 0 18px 0 22px;
    border: solid #cfcfd4;
    border-width: 0 1px;
  }

  .add {
    margin-left: 62px;
  }

  .add svg {
    stroke: #444;
  }

  .sheet-tabs .dots {
    margin: 0 22px 0 auto;
  }

  /* ── Fields pane ──────────────────────────────────────── */
  .pane {
    position: relative;
    flex: none;
    width: 392px;
    padding: 10px 17px 0 19px;
    border-left: 1px solid #c8c8cc;
    background: #f0f0f0;
  }

  .pane-head {
    display: flex;
    align-items: center;
    height: 46px;
  }

  .pane-head h1 {
    flex: 1;
    margin: 0 0 0 -4px;
    font-size: 32px;
    font-weight: 400;
    line-height: 46px;
  }

  .pane-head button {
    margin: 0 7px 0 22px;
  }

  .pane-head svg, .gear svg, .pane-search svg {
    fill: none;
    stroke: #333;
    stroke-width: 1.5;
  }

  .pane-sub {
    display: flex;
    align-items: center;
    justify-content: space-between;
    margin-top: 6px;
  }

  .gear {
    display: flex;
    align-items: center;
    justify-content: center;
    gap: 10px;
    width: 66px;
    height: 41px;
    border: 1px solid #8a8a8a;
    background: #fff;
  }

  .pane-search {
    display: flex;
    align-items: center;
    height: 34px;
    margin: 21px 0 27px;
    padding: 0 4px 0 8px;
    border: 1px solid #8a8a8a;
    background: #fff;
  }

  .pane-search input {
    flex: 1;
    padding: 0;
    border: 0;
    outline: none;
  }

  .field-list {
    display: flex;
    height: 198px;
    border: 1px solid #8a8a8a;
    background: #fff;
    overflow: hidden;
  }

  .field-items {
    flex: 1;
    padding: 4px 4px 0 5px;
  }

  .field {
    display: flex;
    align-items: center;
    gap: 8px;
    height: 33px;
  }

  .field-items .field:nth-child(n + 4) {
    height: 32px;
  }

  .field span {
    flex: 1;
  }

  .field.bold {
    font-weight: 700;
  }

  .field svg {
    fill: none;
    stroke: #333;
    stroke-width: 1.4;
  }

  .field input {
    appearance: none;
    display: grid;
    place-items: center;
    width: 20px;
    height: 20px;
    margin: 0;
    border: 2px solid #7a7a7a;
    background: #fff;
  }

  .field input.soft {
    border-radius: 3px;
  }

  .field input:checked {
    border-color: #107c41;
    background: #107c41;
  }

  .field input:checked::after {
    content: '';
    width: 10px;
    height: 5px;
    margin-bottom: 3px;
    border: solid #fff;
    border-width: 0 0 2px 2px;
    transform: rotate(-45deg);
  }

  .field-list .mini-scroll i {
    height: 78px;
    margin: 18px 0 auto;
  }

  .hint {
    margin: 30px 0 26px 5px;
  }

  .areas {
    display: grid;
    grid-template-columns: 175px 1fr;
    margin: 0 -1px 0 4px;
  }

  .areas section {
    min-width: 0;
    height: 113px;
    padding-right: 9px;
    border-bottom: 1px solid #ababab;
  }

  .areas .right {
    padding: 0 0 0 3px;
    border-left: 1px solid #ababab;
  }

  .areas .low {
    padding-top: 9px;
    border-bottom: 0;
  }

  .areas h3 {
    display: flex;
    align-items: center;
    gap: 10px;
    height: 32px;
    margin: 0;
    padding: 0 0 5px 6px;
    font-size: 18px;
    font-weight: 400;
  }

  .areas .right h3 {
    gap: 8px;
    padding-left: 8px;
  }

  .areas h3 svg {
    fill: #9a9a9a;
  }

  .sigma {
    display: inline-block;
    margin-right: 8px;
    font: 24px/24px 'Liberation Serif', serif;
  }

  .areas h3 .sigma {
    width: 18px;
    margin: 0;
    color: #9a9a9a;
    font-size: 22px;
  }

  .drop-zone {
    display: flex;
    height: 72px;
    background: #fff;
    overflow: hidden;
  }

  .chips {
    flex: 1;
    min-width: 0;
    padding: 3px 1px;
  }

  .chips button {
    display: flex;
    align-items: center;
    justify-content: space-between;
    width: 100%;
    height: 36px;
    margin-bottom: 3px;
    padding: 0 11px;
    border: 1px solid #9a9a9a;
    background: #fff;
  }

  .pane-foot {
    display: flex;
    align-items: center;
    justify-content: space-between;
    margin: 29px -1px 0 8px;
  }

  .pane-foot .field {
    gap: 10px;
  }

  .pane-foot button {
    width: 52px;
    height: 39px;
    border: 1px solid #dcdcdc;
    color: #b8b8b8;
  }

  .watermark {
    position: absolute;
    right: 16px;
    bottom: 6px;
    color: #8a8a8a;
    font: 14px/20px 'Liberation Sans', 'Noto Sans CJK SC', sans-serif;
    text-shadow: 1px 1px 0 #fff;
  }
</style>
